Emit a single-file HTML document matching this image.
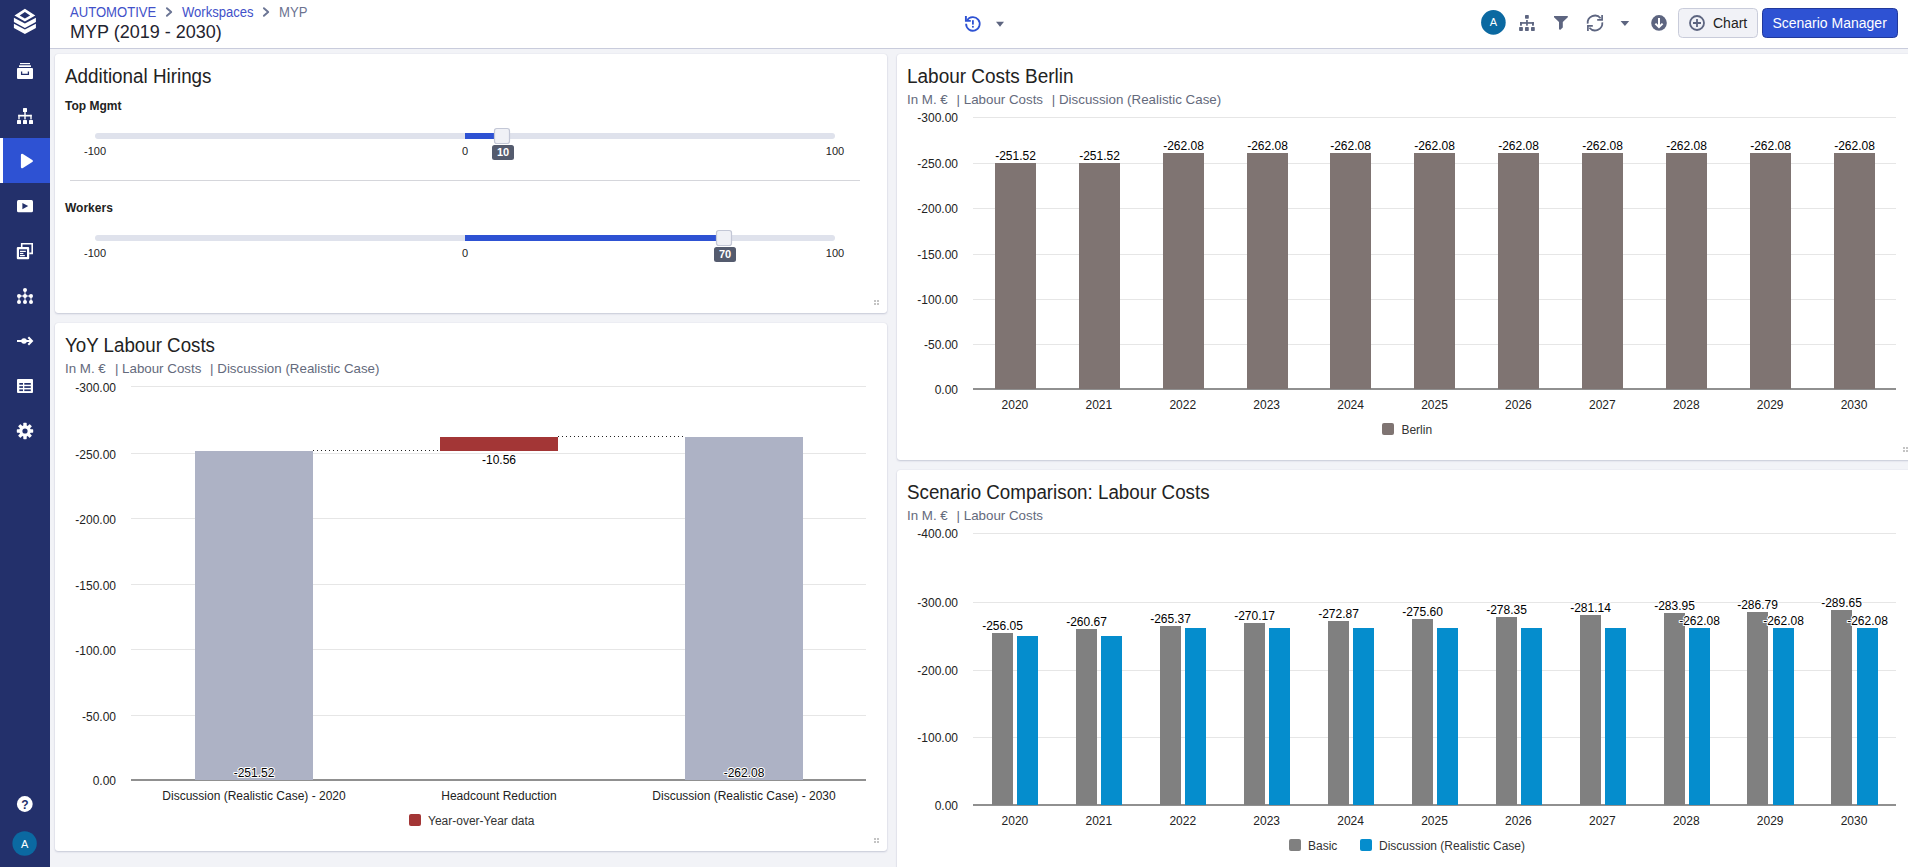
<!DOCTYPE html>
<html><head><meta charset="utf-8">
<style>
html,body{margin:0;padding:0;}
body{width:1908px;height:867px;overflow:hidden;position:relative;background:#f2f3f7;font-family:"Liberation Sans", sans-serif;}
.abs{position:absolute;}
#side{left:0;top:0;width:50px;height:867px;background:#23306b;}
#hdr{left:50px;top:0;width:1858px;height:48px;background:#fff;border-bottom:1px solid #c9ccdc;}
.card{position:absolute;background:#fff;border-radius:3px;box-shadow:0 1px 2px rgba(40,50,100,.2),0 0 1px rgba(40,50,100,.16);}
svg{position:absolute;left:0;top:0;}
svg text{font-family:"Liberation Sans", sans-serif;}
</style></head><body>
<div class="abs" id="side"></div>
<div class="abs" id="hdr"></div>
<div class="card" style="left:55px;top:54px;width:832px;height:259px"></div>
<div class="card" style="left:55px;top:323px;width:832px;height:528px"></div>
<div class="card" style="left:897px;top:54px;width:1030px;height:406px"></div>
<div class="card" style="left:897px;top:470px;width:1030px;height:420px"></div>
<svg width="1908" height="867" viewBox="0 0 1908 867">
<g id="sidebar">
<rect x="0" y="138" width="50" height="45" fill="#2e52d3"/>
<rect x="0" y="138" width="3" height="45" fill="#fff"/>
<path fill="#fff" fill-rule="evenodd" d="M24.9 8.8 L35.3 15.4 L24.9 21.6 L14.5 15.4 Z M24.9 12.1 L30.1 15.4 L24.9 18.5 L19.7 15.4 Z"/>
<path fill="#fff" d="M13.9 17.8 L24.9 23.6 L35.9 17.8 L35.9 22.1 L24.9 27.9 L13.9 22.1 Z"/>
<path fill="#fff" d="M13.9 23.8 L24.9 29.6 L35.9 23.8 L35.9 28.1 L24.9 33.9 L13.9 28.1 Z"/>
<rect x="20" y="63" width="10" height="1.2" fill="#fff"/>
<rect x="19" y="65.2" width="12" height="1.8" fill="#fff" rx="0.5"/>
<rect x="17" y="68" width="16" height="11" fill="#fff" rx="1"/>
<path d="M21.6 71.6 V74.4 H28.4 V71.6" fill="none" stroke="#23306b" stroke-width="1.3"/>
<rect x="23" y="108" width="4" height="4" fill="#fff" rx="0.6"/>
<rect x="18.3" y="114.8" width="13.4" height="1.7" fill="#fff"/><rect x="18.3" y="114.8" width="1.4" height="4.6" fill="#fff"/><rect x="24.3" y="111" width="1.4" height="8.4" fill="#fff"/><rect x="30.3" y="114.8" width="1.4" height="4.6" fill="#fff"/>
<rect x="17" y="120" width="4" height="4" fill="#fff" rx="0.6"/>
<rect x="23" y="120" width="4" height="4" fill="#fff" rx="0.6"/>
<rect x="29" y="120" width="4" height="4" fill="#fff" rx="0.6"/>
<path d="M22.2 155 L31.6 161 L22.2 167 Z" fill="#fff" stroke="#fff" stroke-width="2.6" stroke-linejoin="round"/>
<rect x="17" y="200" width="16" height="12.2" fill="#fff" rx="1.5"/>
<path d="M22.4 203 L28.2 206.1 L22.4 209.2 Z" fill="#23306b"/>
<path d="M21.7 247 V243.8 H32.2 V253.4 H29.2" fill="none" stroke="#fff" stroke-width="1.6"/>
<rect x="16.8" y="247" width="12.4" height="12.2" fill="#fff" rx="1"/>
<rect x="19" y="249.3" width="8" height="7.7" fill="#23306b"/>
<rect x="20" y="250.8" width="5.8" height="1.2" fill="#fff"/>
<rect x="20" y="252.9" width="3.4" height="1.2" fill="#fff"/>
<rect x="20" y="255" width="4.8" height="1.2" fill="#fff"/>
<path d="M25 290 V302 M19 296 H31 M19 296 V302 M31 296 V302" stroke="#fff" stroke-width="1" fill="none"/>
<circle cx="25" cy="290" r="2" fill="#fff"/>
<circle cx="19" cy="296" r="2" fill="#fff"/><circle cx="25" cy="296" r="2" fill="#fff"/><circle cx="31" cy="296" r="2" fill="#fff"/>
<circle cx="19" cy="302" r="2" fill="#fff"/><circle cx="25" cy="302" r="2" fill="#fff"/><circle cx="31" cy="302" r="2" fill="#fff"/>
<path d="M17 341 H31.5" stroke="#fff" stroke-width="2" fill="none"/>
<circle cx="24" cy="341" r="2.8" fill="#fff"/>
<path d="M28.3 337.2 L32 341 L28.3 344.8" stroke="#fff" stroke-width="2" fill="none"/>
<rect x="17" y="379" width="16" height="14" fill="#fff" rx="1"/>
<rect x="19.3" y="383" width="3.7" height="1.7" fill="#23306b"/><rect x="24.3" y="383" width="6.5" height="1.7" fill="#23306b"/>
<rect x="19.3" y="386.2" width="3.7" height="1.7" fill="#23306b"/><rect x="24.3" y="386.2" width="6.5" height="1.7" fill="#23306b"/>
<rect x="19.3" y="389.4" width="3.7" height="1.7" fill="#23306b"/><rect x="24.3" y="389.4" width="6.5" height="1.7" fill="#23306b"/>
<g transform="translate(25 431)">
<circle r="5.8" fill="#fff"/>
<g fill="#fff">
<rect x="-1.7" y="-8.2" width="3.4" height="4" rx="0.6"/>
<rect x="-1.7" y="-8.2" width="3.4" height="4" rx="0.6" transform="rotate(45)"/>
<rect x="-1.7" y="-8.2" width="3.4" height="4" rx="0.6" transform="rotate(90)"/>
<rect x="-1.7" y="-8.2" width="3.4" height="4" rx="0.6" transform="rotate(135)"/>
<rect x="-1.7" y="-8.2" width="3.4" height="4" rx="0.6" transform="rotate(180)"/>
<rect x="-1.7" y="-8.2" width="3.4" height="4" rx="0.6" transform="rotate(225)"/>
<rect x="-1.7" y="-8.2" width="3.4" height="4" rx="0.6" transform="rotate(270)"/>
<rect x="-1.7" y="-8.2" width="3.4" height="4" rx="0.6" transform="rotate(315)"/>
</g>
<circle r="2.6" fill="#23306b"/>
</g>
<circle cx="24.8" cy="804" r="7.9" fill="#fff"/>
<text x="24.8" y="808.6" font-size="12" font-weight="bold" fill="#23306b" text-anchor="middle">?</text>
<circle cx="24.6" cy="843.5" r="12.2" fill="#0b69a1"/>
<text x="24.6" y="847.5" font-size="11" fill="#fff" text-anchor="middle">A</text>
</g>

<g id="header">
<g transform="translate(972.9 23.9)">
<path d="M-6.8 -0.1 A6.8 6.8 0 1 0 -5.83 -3.5" fill="none" stroke="#2e52d3" stroke-width="1.8"/>
<path d="M-7 -8 V-3 H-2.1" fill="none" stroke="#2e52d3" stroke-width="1.9"/>
<rect x="-0.9" y="-3.7" width="1.8" height="4.4" fill="#2e52d3"/>
<rect x="-0.9" y="2" width="1.8" height="1.7" fill="#2e52d3"/>
</g>
<path d="M996 21.8 H1004 L1000 26.8 Z" fill="#5d6580"/>
<circle cx="1493.4" cy="22.4" r="12.3" fill="#0b69a1"/>
<text x="1493.4" y="26.4" font-size="11" fill="#fff" text-anchor="middle">A</text>
<g fill="#5d6580">
<rect x="1525" y="15" width="3.8" height="3.8" rx="0.7"/>
<rect x="1519.1" y="27.1" width="3.8" height="3.8" rx="0.7"/>
<rect x="1525" y="27.1" width="3.8" height="3.8" rx="0.7"/>
<rect x="1531" y="27.1" width="3.8" height="3.8" rx="0.7"/>
<rect x="1526.1" y="20" width="1.7" height="5.7"/>
<rect x="1520" y="22.1" width="13.9" height="1.7"/>
<rect x="1520" y="22.1" width="1.9" height="3.6"/>
<rect x="1532" y="22.1" width="1.9" height="3.6"/>
</g>
<path d="M1554 16.1 H1567.8 V17.3 L1562.8 21.9 V27.4 L1560.4 29.8 Q1559 30 1559 28.8 V21.9 L1554 17.3 Z" fill="#5d6580"/>
<path d="M1587.7 23.6 A7.3 7.3 0 0 1 1600.6 18.3" fill="none" stroke="#5d6580" stroke-width="1.8"/>
<path d="M1602.3 22.4 A7.3 7.3 0 0 1 1589.4 27.7" fill="none" stroke="#5d6580" stroke-width="1.8"/>
<path d="M1602.1 15 V19.9 H1597.2" fill="none" stroke="#5d6580" stroke-width="1.7"/>
<path d="M1587.9 31 V25.8 H1592.8" fill="none" stroke="#5d6580" stroke-width="1.7"/>
<path d="M1620.6 21 H1629.2 L1624.9 26 Z" fill="#5d6580"/>
<circle cx="1659" cy="22.9" r="7.8" fill="#5d6580"/>
<path d="M1659 18 V27 M1655.4 23.6 L1659 27.2 L1662.6 23.6" fill="none" stroke="#fff" stroke-width="2"/>
<rect x="1678.5" y="8.5" width="79" height="29" rx="4" fill="#f1f2f7" stroke="#c9ccda" stroke-width="1"/>
<circle cx="1697" cy="23" r="7" fill="none" stroke="#5d6580" stroke-width="1.8"/>
<path d="M1697 19 V27 M1693 23 H1701" stroke="#5d6580" stroke-width="1.8"/>
<text x="1713" y="28" font-size="14" fill="#222">Chart</text>
<rect x="1762.5" y="8.5" width="135" height="29" rx="4" fill="#2e52d3" stroke="#22399c" stroke-width="1"/>
<text x="1772.4" y="28" font-size="14" fill="#fff">Scenario Manager</text>
</g>

<text x="70" y="17" font-size="14" fill="#4251c9" text-anchor="start" textLength="86.3" lengthAdjust="spacingAndGlyphs" >AUTOMOTIVE</text>
<path d="M166.9 8.2 L171.2 12 L166.9 15.8" fill="none" stroke="#6b7594" stroke-width="1.9" stroke-linecap="round" stroke-linejoin="round"/>
<text x="182" y="17" font-size="14" fill="#4251c9" text-anchor="start" textLength="71.6" lengthAdjust="spacingAndGlyphs" >Workspaces</text>
<path d="M263.9 8.2 L268.2 12 L263.9 15.8" fill="none" stroke="#6b7594" stroke-width="1.9" stroke-linecap="round" stroke-linejoin="round"/>
<text x="279" y="17" font-size="14" fill="#6b7290" text-anchor="start" textLength="28.4" lengthAdjust="spacingAndGlyphs" >MYP</text>
<text x="70" y="37.5" font-size="18" fill="#1f2430" text-anchor="start" >MYP (2019 - 2030)</text>
<text x="65" y="82.6" font-size="19.4" fill="#222" text-anchor="start" textLength="146.5" lengthAdjust="spacingAndGlyphs" >Additional Hirings</text>
<text x="65" y="110" font-size="12" fill="#222" text-anchor="start" font-weight="bold" >Top Mgmt</text>
<rect x="95" y="133" width="740" height="6" fill="#dfe2ec" rx="3"/>
<rect x="465" y="133" width="37.0" height="6" fill="#2e52d3" />
<text x="95" y="155" font-size="11" fill="#222" text-anchor="middle" >-100</text>
<text x="465" y="155" font-size="11" fill="#222" text-anchor="middle" >0</text>
<text x="835" y="155" font-size="11" fill="#222" text-anchor="middle" >100</text>
<rect x="494.5" y="128.5" width="15" height="15" rx="2.2" fill="#f0f1f6" stroke="#c3c7d6" stroke-width="1.2"/>
<rect x="492.0" y="145" width="22" height="15" fill="#545b6e" rx="2.5"/>
<text x="503.0" y="155.6" font-size="11" fill="#fff" text-anchor="middle" font-weight="bold" >10</text>
<rect x="70" y="180" width="790" height="1" fill="#d5d6db" />
<text x="65" y="212" font-size="12" fill="#222" text-anchor="start" font-weight="bold" >Workers</text>
<rect x="95" y="235" width="740" height="6" fill="#dfe2ec" rx="3"/>
<rect x="465" y="235" width="259.0" height="6" fill="#2e52d3" />
<text x="95" y="257" font-size="11" fill="#222" text-anchor="middle" >-100</text>
<text x="465" y="257" font-size="11" fill="#222" text-anchor="middle" >0</text>
<text x="835" y="257" font-size="11" fill="#222" text-anchor="middle" >100</text>
<rect x="716.5" y="230.5" width="15" height="15" rx="2.2" fill="#f0f1f6" stroke="#c3c7d6" stroke-width="1.2"/>
<rect x="714.0" y="247" width="22" height="15" fill="#545b6e" rx="2.5"/>
<text x="725.0" y="257.6" font-size="11" fill="#fff" text-anchor="middle" font-weight="bold" >70</text>
<rect x="874" y="300" width="2" height="2" fill="#c4c4c4" />
<rect x="874" y="303" width="2" height="2" fill="#c4c4c4" />
<rect x="877" y="300" width="2" height="2" fill="#c4c4c4" />
<rect x="877" y="303" width="2" height="2" fill="#c4c4c4" />
<rect x="874" y="838" width="2" height="2" fill="#c4c4c4" />
<rect x="874" y="841" width="2" height="2" fill="#c4c4c4" />
<rect x="877" y="838" width="2" height="2" fill="#c4c4c4" />
<rect x="877" y="841" width="2" height="2" fill="#c4c4c4" />
<rect x="1903" y="447" width="2" height="2" fill="#c4c4c4" />
<rect x="1903" y="450" width="2" height="2" fill="#c4c4c4" />
<rect x="1906" y="447" width="2" height="2" fill="#c4c4c4" />
<rect x="1906" y="450" width="2" height="2" fill="#c4c4c4" />
<text x="65" y="351.7" font-size="19.4" fill="#222" text-anchor="start" textLength="150" lengthAdjust="spacingAndGlyphs" >YoY Labour Costs</text>
<text x="65" y="373" font-size="13.33" fill="#646a7c" text-anchor="start" >In M. €</text>
<text x="114.9" y="373" font-size="13.33" fill="#646a7c" text-anchor="start" >| Labour Costs</text>
<text x="210.1" y="373" font-size="13.33" fill="#646a7c" text-anchor="start" >| Discussion (Realistic Case)</text>
<rect x="131" y="386" width="735" height="1" fill="#e6e6e6" />
<text x="116" y="391.8" font-size="12" fill="#222" text-anchor="end" >-300.00</text>
<rect x="131" y="453" width="735" height="1" fill="#e6e6e6" />
<text x="116" y="458.8" font-size="12" fill="#222" text-anchor="end" >-250.00</text>
<rect x="131" y="518" width="735" height="1" fill="#e6e6e6" />
<text x="116" y="523.8" font-size="12" fill="#222" text-anchor="end" >-200.00</text>
<rect x="131" y="584" width="735" height="1" fill="#e6e6e6" />
<text x="116" y="589.8" font-size="12" fill="#222" text-anchor="end" >-150.00</text>
<rect x="131" y="649" width="735" height="1" fill="#e6e6e6" />
<text x="116" y="654.8" font-size="12" fill="#222" text-anchor="end" >-100.00</text>
<rect x="131" y="715" width="735" height="1" fill="#e6e6e6" />
<text x="116" y="720.8" font-size="12" fill="#222" text-anchor="end" >-50.00</text>
<text x="116" y="785" font-size="12" fill="#222" text-anchor="end" >0.00</text>
<rect x="131" y="779" width="735" height="2" fill="#909090" />
<rect x="195" y="451" width="118" height="329" fill="#adb2c5" />
<rect x="440" y="437" width="118" height="14" fill="#a33636" />
<rect x="685" y="437" width="118" height="343" fill="#adb2c5" />
<line x1="313" y1="450.5" x2="440" y2="450.5" stroke="#222" stroke-width="1" stroke-dasharray="1,3"/>
<line x1="558" y1="436.5" x2="685" y2="436.5" stroke="#222" stroke-width="1" stroke-dasharray="1,3"/>
<text x="254" y="777" font-size="12" fill="#000" text-anchor="middle" stroke="#fff" stroke-width="2" stroke-linejoin="round" paint-order="stroke">-251.52</text>
<text x="744" y="777" font-size="12" fill="#000" text-anchor="middle" stroke="#fff" stroke-width="2" stroke-linejoin="round" paint-order="stroke">-262.08</text>
<text x="499" y="464" font-size="12" fill="#000" text-anchor="middle" stroke="#fff" stroke-width="2" stroke-linejoin="round" paint-order="stroke">-10.56</text>
<text x="254" y="800" font-size="12" fill="#222" text-anchor="middle" >Discussion (Realistic Case) - 2020</text>
<text x="499" y="800" font-size="12" fill="#222" text-anchor="middle" >Headcount Reduction</text>
<text x="744" y="800" font-size="12" fill="#222" text-anchor="middle" >Discussion (Realistic Case) - 2030</text>
<rect x="409" y="814" width="12" height="12" fill="#a33636" rx="2"/>
<text x="428" y="825" font-size="12" fill="#333" text-anchor="start" >Year-over-Year data</text>
<text x="907" y="82.8" font-size="19.4" fill="#222" text-anchor="start" textLength="166.6" lengthAdjust="spacingAndGlyphs" >Labour Costs Berlin</text>
<text x="907" y="104" font-size="13.33" fill="#646a7c" text-anchor="start" >In M. €</text>
<text x="956.6" y="104" font-size="13.33" fill="#646a7c" text-anchor="start" >| Labour Costs</text>
<text x="1051.8" y="104" font-size="13.33" fill="#646a7c" text-anchor="start" >| Discussion (Realistic Case)</text>
<rect x="973" y="117" width="923" height="1" fill="#e6e6e6" />
<text x="958" y="121.8" font-size="12" fill="#222" text-anchor="end" >-300.00</text>
<rect x="973" y="163" width="923" height="1" fill="#e6e6e6" />
<text x="958" y="167.8" font-size="12" fill="#222" text-anchor="end" >-250.00</text>
<rect x="973" y="208" width="923" height="1" fill="#e6e6e6" />
<text x="958" y="212.8" font-size="12" fill="#222" text-anchor="end" >-200.00</text>
<rect x="973" y="254" width="923" height="1" fill="#e6e6e6" />
<text x="958" y="258.8" font-size="12" fill="#222" text-anchor="end" >-150.00</text>
<rect x="973" y="299" width="923" height="1" fill="#e6e6e6" />
<text x="958" y="303.8" font-size="12" fill="#222" text-anchor="end" >-100.00</text>
<rect x="973" y="344" width="923" height="1" fill="#e6e6e6" />
<text x="958" y="348.8" font-size="12" fill="#222" text-anchor="end" >-50.00</text>
<text x="958" y="394" font-size="12" fill="#222" text-anchor="end" >0.00</text>
<rect x="973" y="388" width="923" height="2" fill="#909090" />
<rect x="995" y="163" width="41" height="226" fill="#7f7472" />
<text x="1015.5" y="159.8" font-size="12" fill="#000" text-anchor="middle" stroke="#fff" stroke-width="2" stroke-linejoin="round" paint-order="stroke">-251.52</text>
<text x="1014.9545454545455" y="409" font-size="12" fill="#222" text-anchor="middle" >2020</text>
<rect x="1079" y="163" width="41" height="226" fill="#7f7472" />
<text x="1099.5" y="159.8" font-size="12" fill="#000" text-anchor="middle" stroke="#fff" stroke-width="2" stroke-linejoin="round" paint-order="stroke">-251.52</text>
<text x="1098.8636363636363" y="409" font-size="12" fill="#222" text-anchor="middle" >2021</text>
<rect x="1163" y="153" width="41" height="236" fill="#7f7472" />
<text x="1183.5" y="149.8" font-size="12" fill="#000" text-anchor="middle" stroke="#fff" stroke-width="2" stroke-linejoin="round" paint-order="stroke">-262.08</text>
<text x="1182.7727272727273" y="409" font-size="12" fill="#222" text-anchor="middle" >2022</text>
<rect x="1247" y="153" width="41" height="236" fill="#7f7472" />
<text x="1267.5" y="149.8" font-size="12" fill="#000" text-anchor="middle" stroke="#fff" stroke-width="2" stroke-linejoin="round" paint-order="stroke">-262.08</text>
<text x="1266.6818181818182" y="409" font-size="12" fill="#222" text-anchor="middle" >2023</text>
<rect x="1330" y="153" width="41" height="236" fill="#7f7472" />
<text x="1350.5" y="149.8" font-size="12" fill="#000" text-anchor="middle" stroke="#fff" stroke-width="2" stroke-linejoin="round" paint-order="stroke">-262.08</text>
<text x="1350.590909090909" y="409" font-size="12" fill="#222" text-anchor="middle" >2024</text>
<rect x="1414" y="153" width="41" height="236" fill="#7f7472" />
<text x="1434.5" y="149.8" font-size="12" fill="#000" text-anchor="middle" stroke="#fff" stroke-width="2" stroke-linejoin="round" paint-order="stroke">-262.08</text>
<text x="1434.5" y="409" font-size="12" fill="#222" text-anchor="middle" >2025</text>
<rect x="1498" y="153" width="41" height="236" fill="#7f7472" />
<text x="1518.5" y="149.8" font-size="12" fill="#000" text-anchor="middle" stroke="#fff" stroke-width="2" stroke-linejoin="round" paint-order="stroke">-262.08</text>
<text x="1518.409090909091" y="409" font-size="12" fill="#222" text-anchor="middle" >2026</text>
<rect x="1582" y="153" width="41" height="236" fill="#7f7472" />
<text x="1602.5" y="149.8" font-size="12" fill="#000" text-anchor="middle" stroke="#fff" stroke-width="2" stroke-linejoin="round" paint-order="stroke">-262.08</text>
<text x="1602.318181818182" y="409" font-size="12" fill="#222" text-anchor="middle" >2027</text>
<rect x="1666" y="153" width="41" height="236" fill="#7f7472" />
<text x="1686.5" y="149.8" font-size="12" fill="#000" text-anchor="middle" stroke="#fff" stroke-width="2" stroke-linejoin="round" paint-order="stroke">-262.08</text>
<text x="1686.2272727272727" y="409" font-size="12" fill="#222" text-anchor="middle" >2028</text>
<rect x="1750" y="153" width="41" height="236" fill="#7f7472" />
<text x="1770.5" y="149.8" font-size="12" fill="#000" text-anchor="middle" stroke="#fff" stroke-width="2" stroke-linejoin="round" paint-order="stroke">-262.08</text>
<text x="1770.1363636363635" y="409" font-size="12" fill="#222" text-anchor="middle" >2029</text>
<rect x="1834" y="153" width="41" height="236" fill="#7f7472" />
<text x="1854.5" y="149.8" font-size="12" fill="#000" text-anchor="middle" stroke="#fff" stroke-width="2" stroke-linejoin="round" paint-order="stroke">-262.08</text>
<text x="1854.0454545454545" y="409" font-size="12" fill="#222" text-anchor="middle" >2030</text>
<rect x="1382" y="423" width="12" height="12" fill="#7f7472" rx="2"/>
<text x="1401.4" y="434" font-size="12" fill="#333" text-anchor="start" >Berlin</text>
<text x="907" y="498.8" font-size="19.4" fill="#222" text-anchor="start" textLength="302.6" lengthAdjust="spacingAndGlyphs" >Scenario Comparison: Labour Costs</text>
<text x="907" y="520" font-size="13.33" fill="#646a7c" text-anchor="start" >In M. €</text>
<text x="956.6" y="520" font-size="13.33" fill="#646a7c" text-anchor="start" >| Labour Costs</text>
<rect x="973" y="533" width="923" height="1" fill="#e6e6e6" />
<text x="958" y="537.8" font-size="12" fill="#222" text-anchor="end" >-400.00</text>
<rect x="973" y="602" width="923" height="1" fill="#e6e6e6" />
<text x="958" y="606.8" font-size="12" fill="#222" text-anchor="end" >-300.00</text>
<rect x="973" y="670" width="923" height="1" fill="#e6e6e6" />
<text x="958" y="674.8" font-size="12" fill="#222" text-anchor="end" >-200.00</text>
<rect x="973" y="737" width="923" height="1" fill="#e6e6e6" />
<text x="958" y="741.8" font-size="12" fill="#222" text-anchor="end" >-100.00</text>
<text x="958" y="810" font-size="12" fill="#222" text-anchor="end" >0.00</text>
<rect x="973" y="804" width="923" height="2" fill="#909090" />
<rect x="992" y="633" width="21" height="172" fill="#808080" />
<rect x="1017" y="636" width="21" height="169" fill="#058dcd" />
<rect x="1076" y="629" width="21" height="176" fill="#808080" />
<rect x="1101" y="636" width="21" height="169" fill="#058dcd" />
<rect x="1160" y="626" width="21" height="179" fill="#808080" />
<rect x="1185" y="628" width="21" height="177" fill="#058dcd" />
<rect x="1244" y="623" width="21" height="182" fill="#808080" />
<rect x="1269" y="628" width="21" height="177" fill="#058dcd" />
<rect x="1328" y="621" width="21" height="184" fill="#808080" />
<rect x="1353" y="628" width="21" height="177" fill="#058dcd" />
<rect x="1412" y="619" width="21" height="186" fill="#808080" />
<rect x="1437" y="628" width="21" height="177" fill="#058dcd" />
<rect x="1496" y="617" width="21" height="188" fill="#808080" />
<rect x="1521" y="628" width="21" height="177" fill="#058dcd" />
<rect x="1580" y="615" width="21" height="190" fill="#808080" />
<rect x="1605" y="628" width="21" height="177" fill="#058dcd" />
<rect x="1664" y="613" width="21" height="192" fill="#808080" />
<rect x="1689" y="628" width="21" height="177" fill="#058dcd" />
<rect x="1747" y="612" width="21" height="193" fill="#808080" />
<rect x="1773" y="628" width="21" height="177" fill="#058dcd" />
<rect x="1831" y="610" width="21" height="195" fill="#808080" />
<rect x="1857" y="628" width="21" height="177" fill="#058dcd" />
<text x="1002.5" y="629.5" font-size="12" fill="#000" text-anchor="middle" stroke="#fff" stroke-width="2" stroke-linejoin="round" paint-order="stroke">-256.05</text>
<text x="1014.9545454545455" y="825" font-size="12" fill="#222" text-anchor="middle" >2020</text>
<text x="1086.5" y="625.5" font-size="12" fill="#000" text-anchor="middle" stroke="#fff" stroke-width="2" stroke-linejoin="round" paint-order="stroke">-260.67</text>
<text x="1098.8636363636363" y="825" font-size="12" fill="#222" text-anchor="middle" >2021</text>
<text x="1170.5" y="622.5" font-size="12" fill="#000" text-anchor="middle" stroke="#fff" stroke-width="2" stroke-linejoin="round" paint-order="stroke">-265.37</text>
<text x="1182.7727272727273" y="825" font-size="12" fill="#222" text-anchor="middle" >2022</text>
<text x="1254.5" y="619.5" font-size="12" fill="#000" text-anchor="middle" stroke="#fff" stroke-width="2" stroke-linejoin="round" paint-order="stroke">-270.17</text>
<text x="1266.6818181818182" y="825" font-size="12" fill="#222" text-anchor="middle" >2023</text>
<text x="1338.5" y="617.5" font-size="12" fill="#000" text-anchor="middle" stroke="#fff" stroke-width="2" stroke-linejoin="round" paint-order="stroke">-272.87</text>
<text x="1350.590909090909" y="825" font-size="12" fill="#222" text-anchor="middle" >2024</text>
<text x="1422.5" y="615.5" font-size="12" fill="#000" text-anchor="middle" stroke="#fff" stroke-width="2" stroke-linejoin="round" paint-order="stroke">-275.60</text>
<text x="1434.5" y="825" font-size="12" fill="#222" text-anchor="middle" >2025</text>
<text x="1506.5" y="613.5" font-size="12" fill="#000" text-anchor="middle" stroke="#fff" stroke-width="2" stroke-linejoin="round" paint-order="stroke">-278.35</text>
<text x="1518.409090909091" y="825" font-size="12" fill="#222" text-anchor="middle" >2026</text>
<text x="1590.5" y="611.5" font-size="12" fill="#000" text-anchor="middle" stroke="#fff" stroke-width="2" stroke-linejoin="round" paint-order="stroke">-281.14</text>
<text x="1602.3181818181818" y="825" font-size="12" fill="#222" text-anchor="middle" >2027</text>
<text x="1674.5" y="609.5" font-size="12" fill="#000" text-anchor="middle" stroke="#fff" stroke-width="2" stroke-linejoin="round" paint-order="stroke">-283.95</text>
<text x="1699.5" y="624.5" font-size="12" fill="#000" text-anchor="middle" stroke="#fff" stroke-width="2" stroke-linejoin="round" paint-order="stroke">-262.08</text>
<text x="1686.2272727272727" y="825" font-size="12" fill="#222" text-anchor="middle" >2028</text>
<text x="1757.5" y="608.5" font-size="12" fill="#000" text-anchor="middle" stroke="#fff" stroke-width="2" stroke-linejoin="round" paint-order="stroke">-286.79</text>
<text x="1783.5" y="624.5" font-size="12" fill="#000" text-anchor="middle" stroke="#fff" stroke-width="2" stroke-linejoin="round" paint-order="stroke">-262.08</text>
<text x="1770.1363636363635" y="825" font-size="12" fill="#222" text-anchor="middle" >2029</text>
<text x="1841.5" y="606.5" font-size="12" fill="#000" text-anchor="middle" stroke="#fff" stroke-width="2" stroke-linejoin="round" paint-order="stroke">-289.65</text>
<text x="1867.5" y="624.5" font-size="12" fill="#000" text-anchor="middle" stroke="#fff" stroke-width="2" stroke-linejoin="round" paint-order="stroke">-262.08</text>
<text x="1854.0454545454545" y="825" font-size="12" fill="#222" text-anchor="middle" >2030</text>
<rect x="1289" y="839" width="12" height="12" fill="#808080" rx="2"/>
<text x="1308" y="850" font-size="12" fill="#333" text-anchor="start" >Basic</text>
<rect x="1360" y="839" width="12" height="12" fill="#058dcd" rx="2"/>
<text x="1379" y="850" font-size="12" fill="#333" text-anchor="start" >Discussion (Realistic Case)</text>
</svg>
</body></html>
